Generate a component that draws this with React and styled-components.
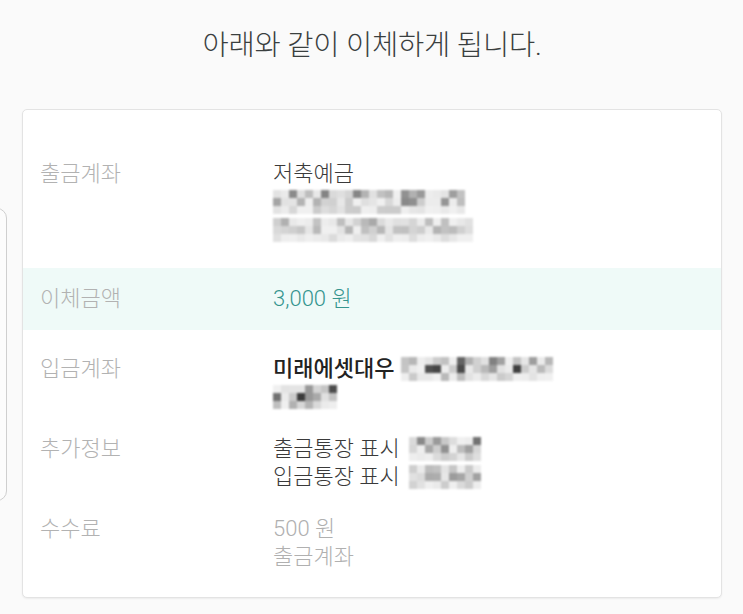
import React from "react";
import styled, { createGlobalStyle } from "styled-components";

const Global = createGlobalStyle`
  html, body { margin: 0; padding: 0; background: #fafafa; }
  body { font-family: Roboto, "Noto Sans CJK KR", sans-serif; }
  * { box-sizing: border-box; }
`;

const Page = styled.div`
  position: relative;
  width: 743px;
  height: 614px;
  overflow: hidden;
  padding: 27px 21px 0 22px;
  background: #fafafa;
`;

const Title = styled.h1`
  margin: 0 0 44px;
  text-align: center;
  font-size: 28.5px;
  line-height: 38px;
  font-weight: 300;
  color: #3a3f3f;
  letter-spacing: -0.2px;
`;

const BehindCard = styled.div`
  position: absolute;
  left: -120px;
  top: 208px;
  width: 127px;
  height: 293px;
  border: 1.5px solid #cfcfcf;
  border-radius: 10px;
  background: #fcfcfc;
`;

const Card = styled.section`
  position: relative;
  background: #fff;
  border: 1px solid #e3e3e3;
  border-radius: 5px;
  box-shadow: 0 1px 2px rgba(0, 0, 0, 0.06);
  padding: 38px 0 14px;
`;

const Row = styled.div`
  display: grid;
  grid-template-columns: 233px 1fr;
  padding: ${(p) => (p.$highlight ? "17px 0" : "12px 0")};
  padding-left: 17px;
  margin: ${(p) => (p.$highlight ? "12px 0 13px" : "0")};
  background: ${(p) => (p.$highlight ? "#effaf8" : "transparent")};
`;

const Label = styled.div`
  font-size: 22px;
  line-height: 28px;
  color: #b2b2b2;
  font-weight: 300;
`;

const Values = styled.div`
  display: flex;
  flex-direction: column;
`;

const Line = styled.div`
  display: flex;
  align-items: center;
  gap: ${(p) => (p.$bold ? "7px" : "9px")};
  height: 28px;
  font-size: 22px;
  line-height: 28px;
  font-weight: 300;
  color: ${(p) => (p.$tone === "teal" ? "#35958f" : p.$tone === "muted" ? "#b0b0b0" : "#3a3a3a")};
  white-space: nowrap;
`;

const Strong = styled.span`
  font-weight: 500;
  color: #222;
`;

function rand(seed) {
  let s = seed;
  return () => {
    s = (s * 9301 + 49297) % 233280;
    return s / 233280;
  };
}

function Mosaic({ width, rows = 3, cell = 8, seed = 1, dark = 0.5 }) {
  const r = rand(seed);
  const cols = Math.floor(width / cell);
  const rects = [];
  for (let y = 0; y < rows; y++) {
    for (let x = 0; x < cols; x++) {
      const v = r();
      const edge = y === rows - 1 ? 0.35 : 1;
      const g = Math.round(250 - v * v * 130 * dark * edge - 10);
      rects.push(
        <rect key={`${x}-${y}`} x={x * cell} y={y * cell} width={cell} height={cell} fill={`rgb(${g},${g},${g})`} />
      );
    }
  }
  return (
    <svg width={cols * cell} height={rows * cell} style={{ display: "block", flex: "none", filter: "blur(0.8px)" }}>
      {rects}
    </svg>
  );
}

export default function App() {
  return (
    <>
      <Global />
      <Page>
        <BehindCard />
        <Title>아래와 같이 이체하게 됩니다.</Title>
        <Card>
          <Row>
            <Label>출금계좌</Label>
            <Values>
              <Line>저축예금</Line>
              <Line><Mosaic width={192} seed={3} dark={0.9} /></Line>
              <Line><Mosaic width={200} seed={11} dark={0.6} /></Line>
            </Values>
          </Row>
          <Row $highlight>
            <Label>이체금액</Label>
            <Values>
              <Line $tone="teal">3,000 원</Line>
            </Values>
          </Row>
          <Row>
            <Label>입금계좌</Label>
            <Values>
              <Line $bold>
                <Strong>미래에셋대우</Strong>
                <Mosaic width={152} seed={7} dark={1.4} />
              </Line>
              <Line><Mosaic width={64} seed={21} dark={1.4} /></Line>
            </Values>
          </Row>
          <Row>
            <Label>추가정보</Label>
            <Values>
              <Line>출금통장 표시 <Mosaic width={72} seed={5} dark={1.0} /></Line>
              <Line>입금통장 표시 <Mosaic width={72} seed={9} dark={0.8} /></Line>
            </Values>
          </Row>
          <Row>
            <Label>수수료</Label>
            <Values>
              <Line $tone="muted">500 원</Line>
              <Line $tone="muted">출금계좌</Line>
            </Values>
          </Row>
        </Card>
      </Page>
    </>
  );
}
